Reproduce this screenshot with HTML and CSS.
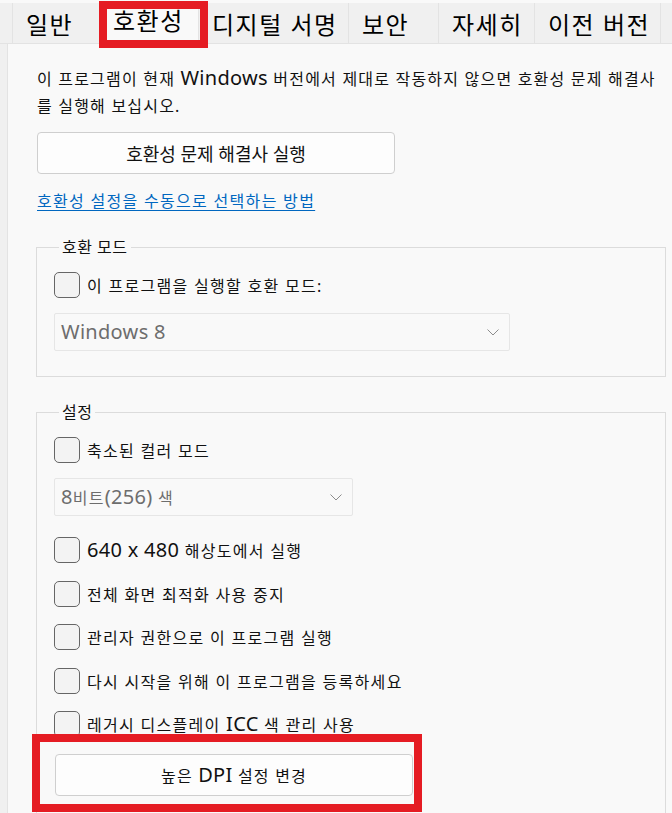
FILE: index.html
```html
<!DOCTYPE html>
<html lang="ko">
<head>
<meta charset="utf-8">
<title>호환성</title>
<link rel="stylesheet" href="styles.css">
</head>
<body>
<div class="window">
  <div class="tabbar">
    <div class="tab tab-general">일반</div>
    <div class="tab tab-compat active">호환성<span class="mark mark-tab"></span></div>
    <div class="tab tab-sign">디지털 서명</div>
    <div class="tab tab-security">보안</div>
    <div class="tab tab-details">자세히</div>
    <div class="tab tab-prev">이전 버전</div>
  </div>
  <div class="panel">
    <p class="intro">이 프로그램이 현재 <span class="lat">Windows</span> 버전에서 제대로 작동하지 않으면 호환성 문제 해결사<br>를 실행해 보십시오.</p>
    <button class="btn btn-trouble">호환성 문제 해결사 실행</button>
    <a class="link" href="#">호환성 설정을 수동으로 선택하는 방법</a>

    <fieldset class="group group-mode">
      <legend>호환 모드</legend>
      <div class="check"><span class="box"></span><span>이 프로그램을 실행할 호환 모드:</span></div>
      <div class="select select-wide">
        <span class="lat">Windows 8</span>
        <svg class="chev" width="12" height="7" viewBox="0 0 12 7"><path d="M0.5 0.5 L6 6 L11.5 0.5" fill="none" stroke="#8c8c8c" stroke-width="1"/></svg>
      </div>
    </fieldset>

    <fieldset class="group group-settings">
      <legend>설정</legend>
      <div class="check"><span class="box"></span><span>축소된 컬러 모드</span></div>
      <div class="select select-narrow">
        <span><span class="lat">8</span>비트<span class="lat">(256)</span> 색</span>
        <svg class="chev" width="12" height="7" viewBox="0 0 12 7"><path d="M0.5 0.5 L6 6 L11.5 0.5" fill="none" stroke="#8c8c8c" stroke-width="1"/></svg>
      </div>
      <div class="checklist">
        <div class="check"><span class="box"></span><span><span class="lat">640 x 480</span> 해상도에서 실행</span></div>
        <div class="check"><span class="box"></span><span>전체 화면 최적화 사용 중지</span></div>
        <div class="check"><span class="box"></span><span>관리자 권한으로 이 프로그램 실행</span></div>
        <div class="check"><span class="box"></span><span>다시 시작을 위해 이 프로그램을 등록하세요</span></div>
        <div class="check"><span class="box"></span><span>레거시 디스플레이 <span class="lat">ICC</span> 색 관리 사용</span></div>
      </div>
      <div class="dpi-wrap">
        <button class="btn btn-dpi">높은 <span class="lat">DPI</span> 설정 변경</button>
        <span class="mark mark-dpi"></span>
      </div>
    </fieldset>
  </div>
</div>
</body>
</html>
```

FILE: styles.css
```css
html, body {
  margin: 0;
  padding: 0;
}
body {
  width: 672px;
  height: 813px;
  overflow: hidden;
  background: #f0f0f0;
  font-family: "Noto Sans", "Noto Sans CJK KR", sans-serif;
  color: #111;
}
.window {
  border-top: 3px solid #f9f9f9;
  background: #f0f0f0;
  height: 810px;
}
.lat {
  font-size: 1.25em;
  line-height: 1;
  letter-spacing: 0.3px;
}

/* tabs */
.tabbar {
  display: flex;
  height: 40px;
  padding-left: 12px;
  border-bottom: 1px solid #e3e3e3;
  background: #f0f0f0;
}
.tab {
  position: relative;
  display: flex;
  align-items: center;
  box-sizing: border-box;
  padding: 0 0 0 13px;
  border-left: 1px solid #e3e3e3;
  font-size: 24px;
  letter-spacing: 1.5px;
  color: #000;
  white-space: nowrap;
}
.tab-general { width: 87px; }
.tab-compat { width: 99px; }
.tab-sign { width: 150px; }
.tab-security { width: 90px; }
.tab-details { width: 96px; }
.tab-prev { width: 127px; border-right: 1px solid #e3e3e3; }
.tab.active {
  background: #f9f9f9;
  margin-top: -2px;
  height: 43px;
  padding-bottom: 6px;
  z-index: 2;
}

/* annotation marks */
.mark {
  position: absolute;
  border: 8px solid #e51c23;
  pointer-events: none;
  z-index: 5;
}
.mark-tab {
  left: -1px;
  top: 0;
  width: 93px;
  height: 31px;
}
.mark-dpi {
  left: -23px;
  top: -20px;
  width: 374px;
  height: 62px;
}

/* panel */
.panel {
  margin-left: 7px;
  border-left: 1px solid #e3e3e3;
  background: #f9f9f9;
  padding: 22px 6px 0 28px;
  height: 780px;
}
.intro {
  margin: 0 0 0 1px;
  font-size: 16px;
  line-height: 27px;
  letter-spacing: 1.2px;
  white-space: nowrap;
}
.btn {
  display: block;
  box-sizing: border-box;
  width: 358px;
  height: 42px;
  background: #fdfdfd;
  border: 1px solid #cfcfcf;
  border-radius: 4px;
  font-family: inherit;
  font-size: 18px;
  color: #111;
  padding: 0;
}
.btn-trouble {
  margin: 12px 0 0 1px;
}
.btn-dpi {
  font-size: 16px;
  letter-spacing: 1.2px;
}
.link {
  display: inline-block;
  margin: 15px 0 0 1px;
  font-size: 16px;
  line-height: 24px;
  letter-spacing: 1.3px;
  color: #0067c0;
  text-decoration: underline;
  text-underline-offset: 3px;
}

/* group boxes */
.group {
  margin: 24px 0 0 0;
  padding: 15px 0 25px 17px;
  border: 1px solid #dcdcdc;
  min-width: 0;
}
.group-settings {
  margin-top: 25px;
  padding-bottom: 40px;
}
.group legend {
  margin-left: 5px;
  padding: 0 3px;
  font-size: 16px;
  line-height: 20px;
  letter-spacing: 0.5px;
}
.check {
  display: flex;
  align-items: center;
  gap: 7px;
  height: 26px;
  font-size: 16px;
  letter-spacing: 1.3px;
  white-space: nowrap;
}
.box {
  flex: none;
  box-sizing: border-box;
  width: 26px;
  height: 26px;
  border: 1.5px solid #666;
  border-radius: 5px;
  background: #f3f3f3;
}
.select {
  display: flex;
  align-items: center;
  justify-content: space-between;
  box-sizing: border-box;
  height: 38px;
  margin-top: 15px;
  padding: 0 10px 0 6px;
  border: 1px solid #e6e6e6;
  border-radius: 2px;
  background: #f9f9f9;
  color: #6d6d6d;
  font-size: 16px;
  letter-spacing: 1.3px;
}
.select-wide { width: 456px; }
.select-narrow { width: 299px; }
.checklist {
  display: flex;
  flex-direction: column;
  gap: 17.5px;
  margin-top: 21px;
}
.dpi-wrap {
  position: relative;
  margin-top: 17px;
  margin-left: 1px;
  width: 358px;
}
```
